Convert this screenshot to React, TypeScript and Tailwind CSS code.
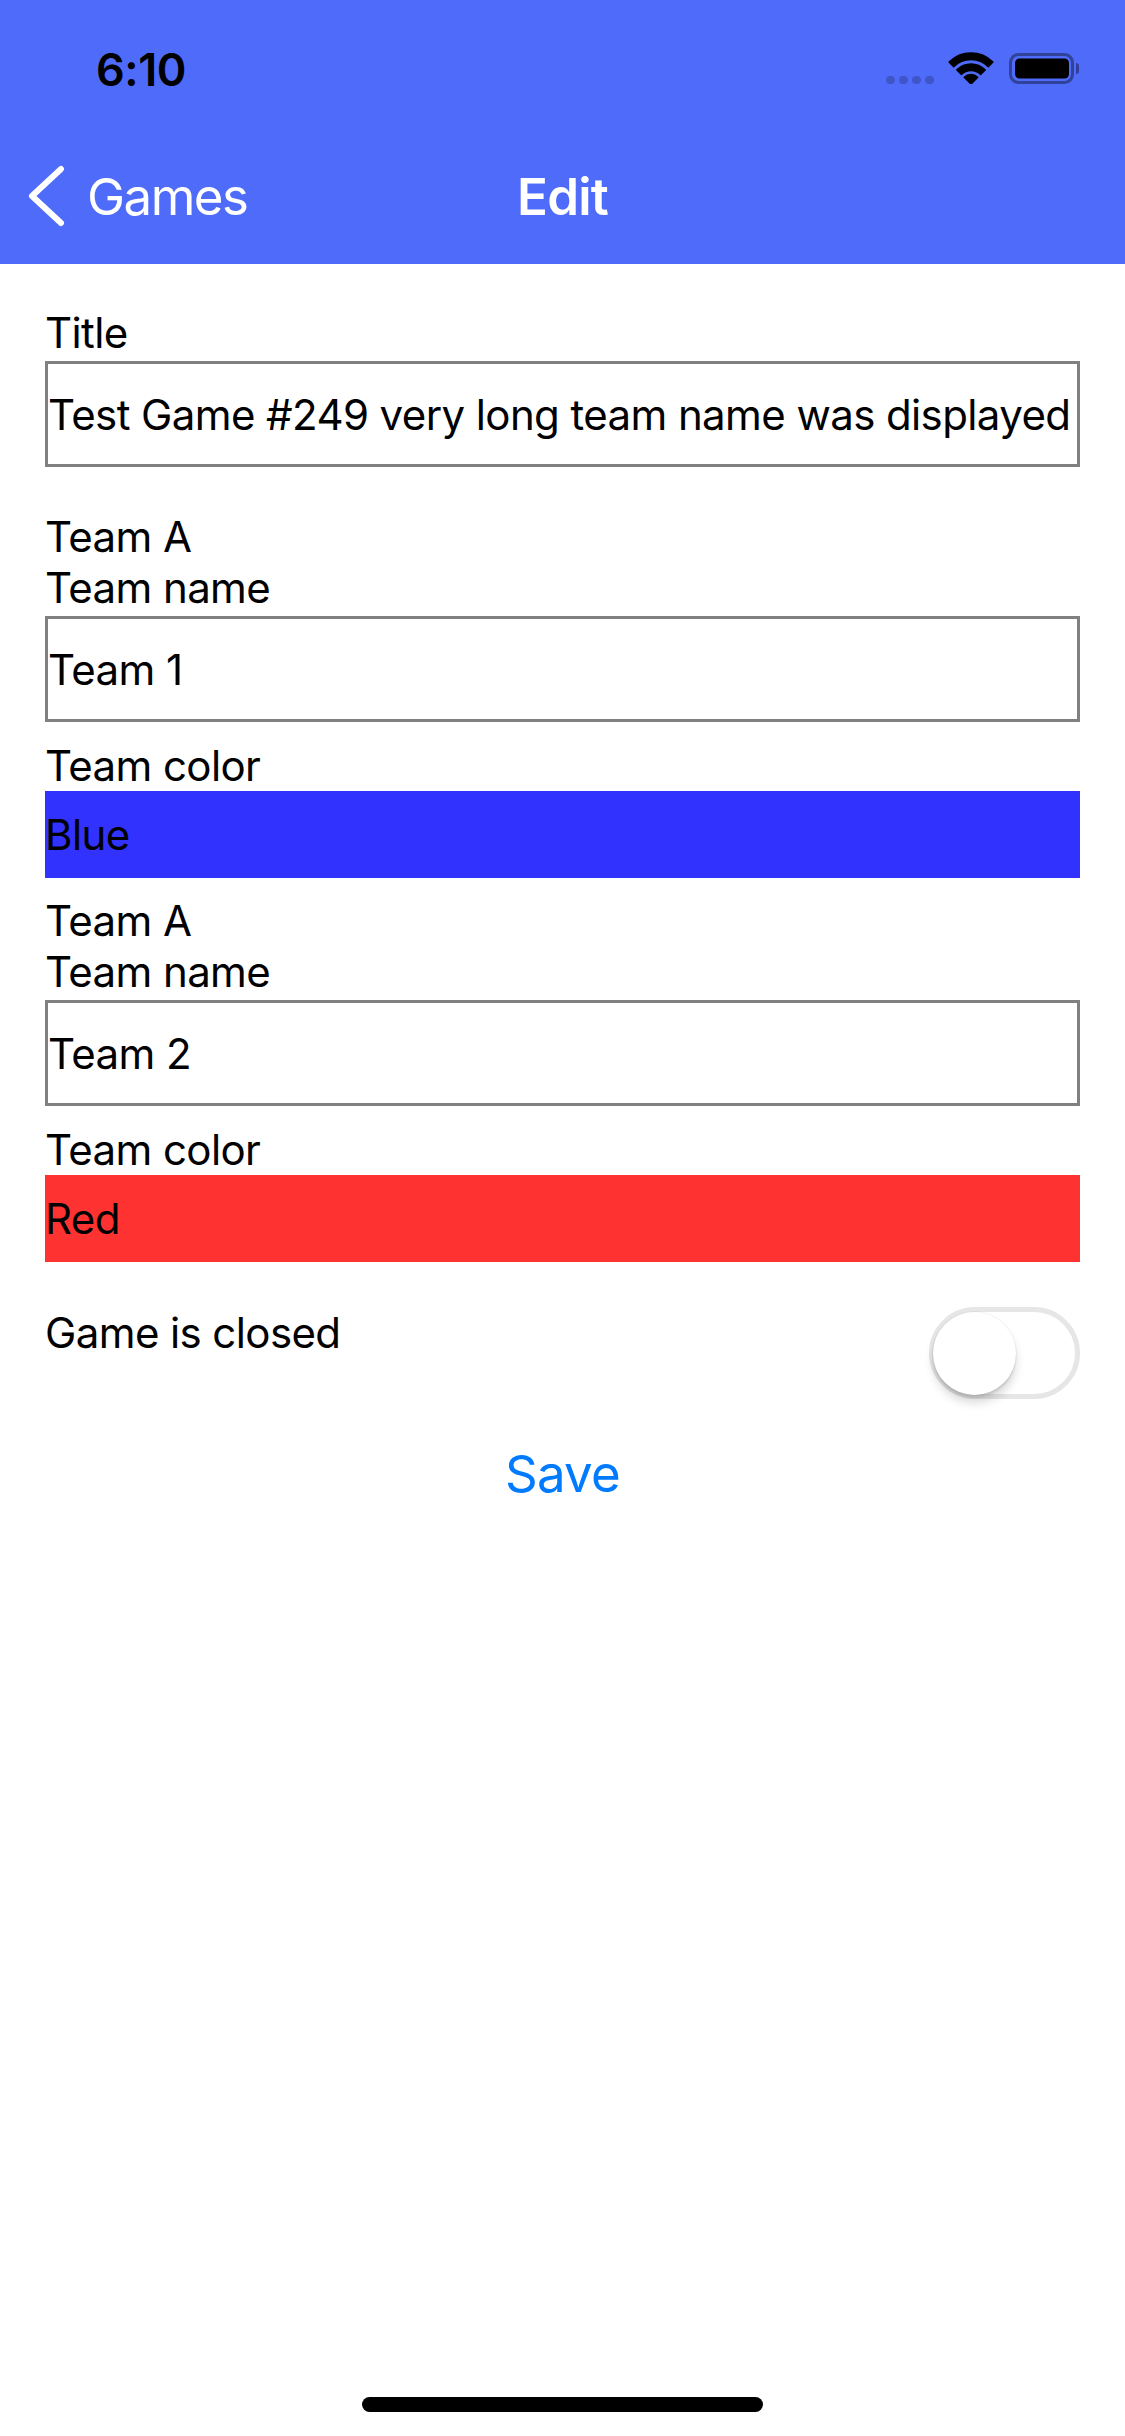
import React from "react";

function band(cx: number, cy: number, r1: number, r2: number, a1: number, a2: number) {
  const rad = (a: number) => (a * Math.PI) / 180;
  const p = (r: number, a: number) => `${(cx + r * Math.cos(rad(a))).toFixed(2)} ${(cy + r * Math.sin(rad(a))).toFixed(2)}`;
  if (r1 <= 0) {
    return `M${cx} ${cy} L${p(r2, a1)} A${r2} ${r2} 0 0 1 ${p(r2, a2)} Z`;
  }
  return `M${p(r1, a1)} L${p(r2, a1)} A${r2} ${r2} 0 0 1 ${p(r2, a2)} L${p(r1, a2)} A${r1} ${r1} 0 0 0 ${p(r1, a1)} Z`;
}

function Wifi() {
  const cx = 23;
  const cy = 32;
  return (
    <svg width="46" height="32" viewBox="0 0 46 32">
      <g fill="#000" stroke="#000" strokeWidth="1.5" strokeLinejoin="round">
        <path d={band(cx, cy, 24.5, 31, -135, -45)} />
        <path d={band(cx, cy, 13.5, 20, -135, -45)} />
        <path d={band(cx, cy, 0, 9.5, -135, -45)} />
      </g>
    </svg>
  );
}

function Battery() {
  return (
    <svg width="72" height="31" viewBox="0 0 72 31">
      <rect x="1.5" y="1.5" width="62" height="28" rx="8" fill="none" stroke="rgba(0,0,0,0.38)" strokeWidth="3" />
      <rect x="6" y="5.5" width="54" height="20" rx="4.5" fill="#000" />
      <path d="M67 10 a3 3 0 0 1 3 3 v5 a3 3 0 0 1 -3 3 z" fill="rgba(0,0,0,0.4)" />
    </svg>
  );
}

function Signal() {
  return (
    <div className="flex items-end gap-[4px]">
      <div className="w-[9px] h-[8px] rounded-full bg-black/20" />
      <div className="w-[9px] h-[8px] rounded-full bg-black/20" />
      <div className="w-[9px] h-[8px] rounded-full bg-black/20" />
      <div className="w-[9px] h-[8px] rounded-full bg-black/20" />
    </div>
  );
}

function Chevron() {
  return (
    <svg width="40" height="62" viewBox="0 0 40 62">
      <path d="M36 4 L7 31 L36 58" fill="none" stroke="#fff" strokeWidth="6" strokeLinecap="round" strokeLinejoin="round" />
    </svg>
  );
}

function Label({ children, className = "" }: { children: React.ReactNode; className?: string }) {
  return <div className={`text-[42px] leading-[51px] tracking-[-0.6px] text-black ${className}`}>{children}</div>;
}

function TextBox({ value, className = "" }: { value: string; className?: string }) {
  return (
    <div
      className={`h-[106px] border-[3px] border-[#808080] flex items-center overflow-hidden whitespace-nowrap text-[42px] leading-[51px] tracking-[-0.6px] text-black ${className}`}
    >
      {value}
    </div>
  );
}

function ColorBox({ value, color }: { value: string; color: "blue" | "red" }) {
  return (
    <div
      className={`h-[87px] flex items-center text-[42px] leading-[51px] tracking-[-0.6px] text-black ${
        color === "blue" ? "bg-[#3232FF]" : "bg-[#FF3232]"
      }`}
    >
      {value}
    </div>
  );
}

function TeamSection({ name, colorName, color, mt }: { name: string; colorName: string; color: "blue" | "red"; mt: string }) {
  return (
    <div className={`flex flex-col ${mt}`}>
      <Label>Team A</Label>
      <Label>Team name</Label>
      <TextBox value={name} className="mt-[3px]" />
      <Label className="mt-[18px]">Team color</Label>
      <ColorBox value={colorName} color={color} />
    </div>
  );
}

export default function App() {
  return (
    <div className="w-full h-[2436px] flex flex-col bg-white font-[Inter,sans-serif] antialiased">
      {/* Header */}
      <div className="bg-[#4F6BFA] h-[264px] flex flex-col">
        {/* Status bar */}
        <div className="h-[132px] pt-[43px] pl-[96px] pr-[44px] flex items-start justify-between">
          <div className="text-[45px] leading-[54px] font-semibold tracking-[-0.5px] text-black">6:10</div>
          <div className="h-[41px] flex items-end">
            <Signal />
            <div className="ml-[14px]">
              <Wifi />
            </div>
            <div className="ml-[15px]">
              <Battery />
            </div>
          </div>
        </div>
        {/* Nav bar */}
        <div className="h-[132px] pt-[33px]">
          <div className="h-[61px] grid grid-cols-[1fr_auto_1fr] items-center">
            <div className="flex items-center">
              <div className="ml-[25px] flex items-center">
                <Chevron />
              </div>
              <span className="ml-[22px] text-[51px] leading-[61px] text-white tracking-[-1.5px]">Games</span>
            </div>
            <div className="text-[51px] leading-[61px] text-white font-semibold tracking-[-0.8px]">Edit</div>
            <div />
          </div>
        </div>
      </div>

      {/* Form */}
      <div className="px-[45px] pt-[43px] flex flex-col">
        <Label>Title</Label>
        <TextBox value="Test Game #249 very long team name was displayed" className="mt-[3px]" />

        <TeamSection name="Team 1" colorName="Blue" color="blue" mt="mt-[44px]" />
        <TeamSection name="Team 2" colorName="Red" color="red" mt="mt-[17px]" />

        <div className="mt-[45px] flex items-start justify-between">
          <Label>Game is closed</Label>
          <div className="w-[151px] h-[92px] rounded-full border-[5px] border-[#e6e6e6] bg-white flex items-center">
            <div className="ml-[-1px] w-[83px] h-[83px] rounded-full bg-white shadow-[0_0_0_1px_rgba(0,0,0,0.04),0_8px_10px_rgba(0,0,0,0.15),0_3px_2px_rgba(0,0,0,0.08)]" />
          </div>
        </div>

        <div className="mt-[44px] text-center text-[51px] leading-[61px] tracking-[-0.8px] text-[#007AFF]">Save</div>
      </div>

      {/* Home indicator */}
      <div className="mt-auto mb-[24px] self-center w-[401px] h-[15px] rounded-full bg-black" />
    </div>
  );
}
